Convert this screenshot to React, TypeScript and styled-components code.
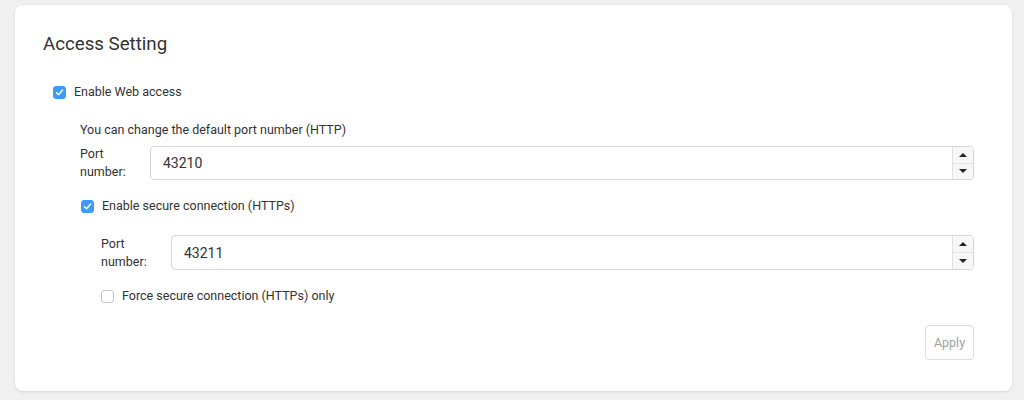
import React from "react";
import styled, { createGlobalStyle } from "styled-components";

const Global = createGlobalStyle`
  html, body { margin: 0; padding: 0; background: #f0f0f0; }
  body { font-family: Roboto, "Helvetica Neue", Arial, sans-serif; color: #333; }
  * { box-sizing: border-box; }
`;

const Page = styled.div`
  padding: 5px 12px 9px 15px;
`;

const Card = styled.div`
  width: 997px;
  height: 386px;
  background: #fff;
  border-radius: 8px;
  box-shadow: 0 1px 3px rgba(0, 0, 0, 0.12);
  padding: 28px 38px 31px 28px;
  display: flex;
  flex-direction: column;
`;

const Title = styled.h2`
  margin: 0;
  font-size: 18.7px;
  line-height: 22px;
  font-weight: 400;
  color: #333;
`;

const CheckRow = styled.label<{ $indent: number; $top: number }>`
  display: flex;
  align-items: center;
  gap: 8px;
  height: 18px;
  margin-left: ${(p) => p.$indent}px;
  margin-top: ${(p) => p.$top}px;
  font-size: 12.5px;
  line-height: 18px;
  color: #333;
`;

const Box = styled.span<{ $checked?: boolean }>`
  width: 13px;
  height: 13px;
  border-radius: 3px;
  flex: none;
  display: flex;
  align-items: center;
  justify-content: center;
  background: ${(p) => (p.$checked ? "#3c9af8" : "#fff")};
  border: 1px solid ${(p) => (p.$checked ? "#3c9af8" : "#c6c6c6")};
`;

const Block = styled.div<{ $indent: number; $top: number }>`
  margin-left: ${(p) => p.$indent}px;
  margin-top: ${(p) => p.$top}px;
  display: flex;
  flex-direction: column;
`;

const Hint = styled.div`
  font-size: 12.5px;
  line-height: 18px;
  height: 18px;
  margin-bottom: 7px;
`;

const FieldRow = styled.div<{ $h: number }>`
  display: flex;
  align-items: center;
  height: ${(p) => p.$h}px;
`;

const FieldLabel = styled.div`
  width: 70px;
  flex: none;
  font-size: 12.5px;
  line-height: 18px;
  padding-right: 10px;
`;

const Spin = styled.div`
  flex: 1;
  align-self: stretch;
  display: flex;
  border: 1px solid #d6d6d6;
  border-radius: 4px;
  overflow: hidden;
`;

const Value = styled.div`
  flex: 1;
  display: flex;
  align-items: center;
  padding-left: 12px;
  font-size: 14px;
  color: #333;
`;

const Arrows = styled.div`
  width: 21px;
  display: flex;
  flex-direction: column;
  border-left: 1px solid #e2e2e2;
  background: #f7f7f7;
`;

const ArrowBtn = styled.div<{ $down?: boolean }>`
  flex: 1;
  display: flex;
  align-items: center;
  justify-content: center;
  border-top: ${(p) => (p.$down ? "1px solid #e6e6e6" : "none")};
  &::before {
    content: "";
    width: 0;
    height: 0;
    border-left: 4px solid transparent;
    border-right: 4px solid transparent;
    ${(p) =>
      p.$down ? "border-top: 4px solid #222;" : "border-bottom: 4px solid #222;"}
  }
`;

const Footer = styled.div`
  margin-top: auto;
  display: flex;
  justify-content: flex-end;
`;

const ApplyBtn = styled.button`
  width: 49px;
  height: 35px;
  border: 1px solid #dcdcdc;
  border-radius: 4px;
  background: #fff;
  color: #a0a0a0;
  font-family: Roboto, "Helvetica Neue", Arial, sans-serif;
  font-size: 12.5px;
  padding: 0;
`;

const Check = ({ checked }: { checked?: boolean }) => (
  <Box $checked={checked}>
    {checked && (
      <svg width="9" height="9" viewBox="0 0 9 9">
        <path d="M1.5 4.7 L3.6 6.8 L7.6 2" fill="none" stroke="#fff" strokeWidth="1.5" strokeLinecap="round" strokeLinejoin="round" />
      </svg>
    )}
  </Box>
);

const PortField = ({ value, h }: { value: string; h: number }) => (
  <FieldRow $h={h}>
    <FieldLabel>Port number:</FieldLabel>
    <Spin>
      <Value>{value}</Value>
      <Arrows>
        <ArrowBtn />
        <ArrowBtn $down />
      </Arrows>
    </Spin>
  </FieldRow>
);

export default function App() {
  return (
    <>
      <Global />
      <Page>
        <Card>
          <Title>Access Setting</Title>
          <CheckRow $indent={10} $top={28}>
            <Check checked />
            Enable Web access
          </CheckRow>
          <Block $indent={37} $top={20}>
            <Hint>You can change the default port number (HTTP)</Hint>
            <PortField value="43210" h={34} />
            <CheckRow $indent={1} $top={17}>
              <Check checked />
              Enable secure connection (HTTPs)
            </CheckRow>
            <Block $indent={21} $top={20}>
              <PortField value="43211" h={35} />
              <CheckRow $indent={0} $top={17}>
                <Check />
                Force secure connection (HTTPs) only
              </CheckRow>
            </Block>
          </Block>
          <Footer>
            <ApplyBtn>Apply</ApplyBtn>
          </Footer>
        </Card>
      </Page>
    </>
  );
}
